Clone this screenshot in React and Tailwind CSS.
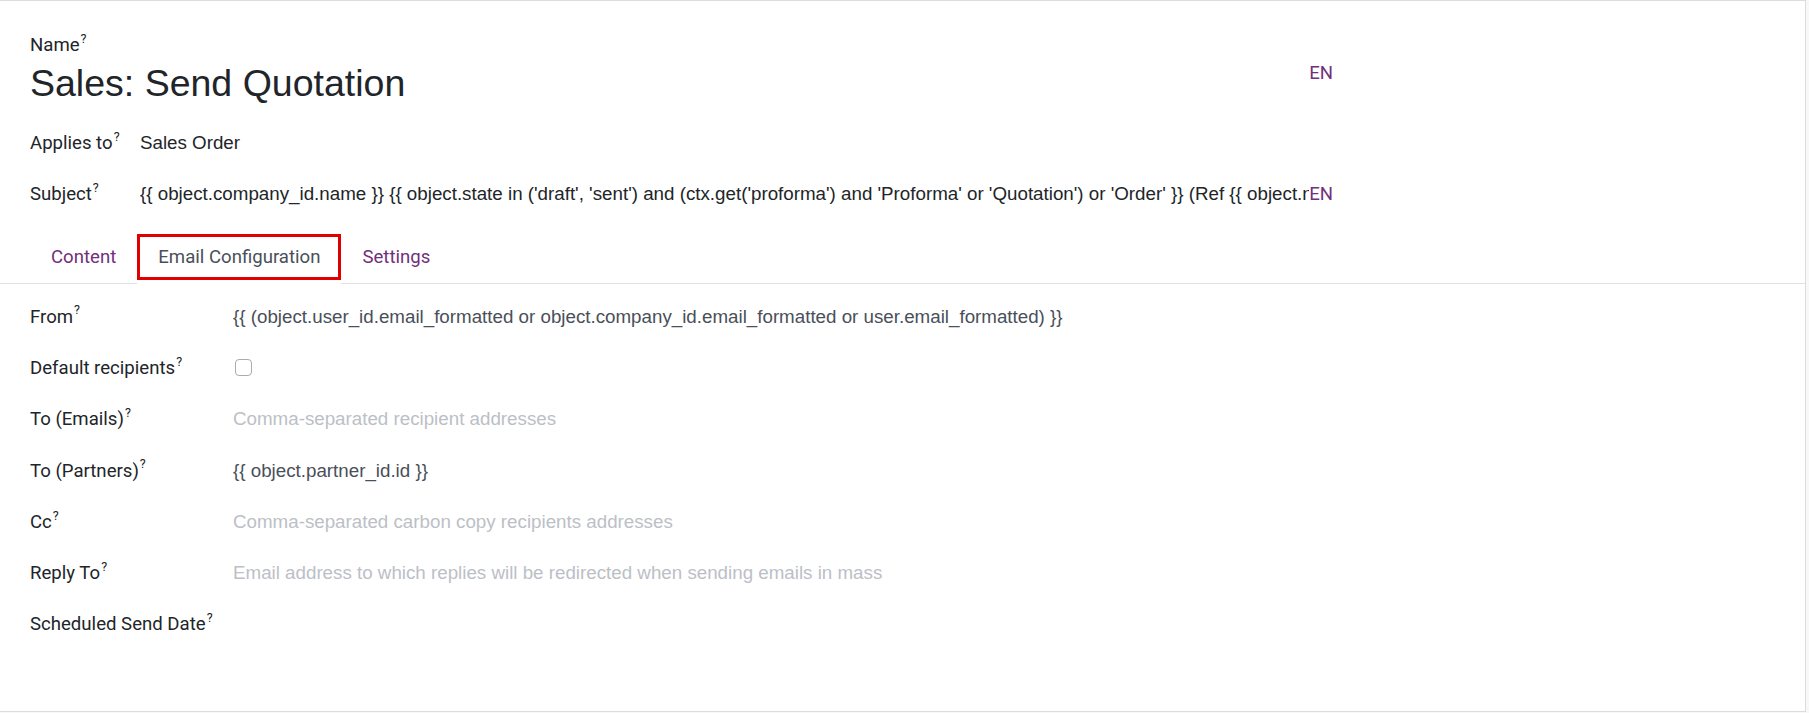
import React from "react";

const roboto = { fontFamily: "Roboto, 'Noto Sans', sans-serif" };

function Q() {
  return (
    <sup className="relative -top-[1px] ml-[1px] text-[12.5px] text-[#212529] align-super leading-none" style={roboto}>?</sup>
  );
}

function Label({ children, className = "" }) {
  return (
    <div className={"text-[18.6px] leading-[24px] text-[#212529] whitespace-nowrap font-['Roboto',sans-serif] " + className}>
      {children}
      <Q />
    </div>
  );
}

const rows = [
  { label: "From", value: "{{ (object.user_id.email_formatted or object.company_id.email_formatted or user.email_formatted) }}" },
  { label: "Default recipients", checkbox: true },
  { label: "To (Emails)", placeholder: "Comma-separated recipient addresses" },
  { label: "To (Partners)", value: "{{ object.partner_id.id }}" },
  { label: "Cc", placeholder: "Comma-separated carbon copy recipients addresses" },
  { label: "Reply To", placeholder: "Email address to which replies will be redirected when sending emails in mass" },
  { label: "Scheduled Send Date" },
];

export default function App() {
  return (
    <div className="w-[1809px] h-[713px] flex bg-[#f8f8f8] overflow-hidden">
      <div className="w-[1806px] h-[712px] bg-white border-t border-b border-r border-[#dcdcdc] flex flex-col">
        {/* header section */}
        <div className="pl-[30px] pt-[32px]">
          <div className="w-[1303px] flex flex-col">
            <Label className="leading-[22px]">Name</Label>
            <div className="flex items-start mt-[3px]">
              <div className="flex-1 text-[37.5px] leading-[46px] text-[#212529] font-['Liberation_Sans',Arial,sans-serif]">
                Sales: Send Quotation
              </div>
              <div className="mt-[1px] text-[18.6px] leading-[24px] text-[#71307a] font-['Roboto',sans-serif]">EN</div>
            </div>
            <div className="flex items-center mt-[25px] h-[24px]">
              <Label className="w-[110px] shrink-0">Applies to</Label>
              <div className="text-[18.75px] leading-[24px] text-[#212529] font-['Liberation_Sans',Arial,sans-serif]">Sales Order</div>
            </div>
            <div className="flex items-center mt-[27px] h-[24px]">
              <Label className="w-[110px] shrink-0">Subject</Label>
              <div className="flex-1 min-w-0 overflow-hidden whitespace-nowrap text-[18.75px] leading-[24px] text-[#212529] font-['Liberation_Sans',Arial,sans-serif]">
                {"{{ object.company_id.name }} {{ object.state in ('draft', 'sent') and (ctx.get('proforma') and 'Proforma' or 'Quotation') or 'Order' }} (Ref {{ object.name or 'n/a' }})"}
              </div>
              <div className="shrink-0 text-[18.6px] leading-[24px] text-[#71307a] font-['Roboto',sans-serif]">EN</div>
            </div>
          </div>
        </div>

        {/* tabs */}
        <div className="mt-[28px] flex items-end h-[50px]">
          <div className="w-[30px] h-[50px] border-b border-[#dee2e6]" />
          <div className="px-[21px] h-[50px] flex items-center border-b border-[#dee2e6] text-[18.6px] text-[#71307a] font-['Roboto',sans-serif]">
            <span className="-mt-[2px]">Content</span>
          </div>
          <div className="h-[50px] flex flex-col">
            <div className="h-[46px] px-[18px] flex items-center border-[3px] border-[#e00000] text-[18.6px] text-[#4a4f59] font-['Roboto',sans-serif]">
              <span className="mt-[1px]">Email Configuration</span>
            </div>
            <div className="h-[4px]" />
          </div>
          <div className="px-[21px] h-[50px] flex items-center border-b border-[#dee2e6] text-[18.6px] text-[#71307a] font-['Roboto',sans-serif]">
            <span className="-mt-[1px]">Settings</span>
          </div>
          <div className="flex-1 h-[50px] border-b border-[#dee2e6]" />
        </div>

        {/* email configuration form */}
        <div className="pl-[30px] pt-[7px] flex flex-col">
          {rows.map((r) => (
            <div key={r.label} className="h-[51.3px] flex items-center">
              <Label className="w-[203px] shrink-0">{r.label}</Label>
              {r.value && (
                <div className="text-[18.75px] leading-[24px] text-[#4a4f59] whitespace-nowrap font-['Liberation_Sans',Arial,sans-serif]">{r.value}</div>
              )}
              {r.placeholder && (
                <div className="text-[18.75px] leading-[24px] text-[#bcc0c6] whitespace-nowrap font-['Liberation_Sans',Arial,sans-serif]">{r.placeholder}</div>
              )}
              {r.checkbox && (
                <div className="ml-[2px] w-[17px] h-[17px] rounded-[4px] border border-[#a8adb3] bg-white" />
              )}
            </div>
          ))}
        </div>
      </div>
    </div>
  );
}
